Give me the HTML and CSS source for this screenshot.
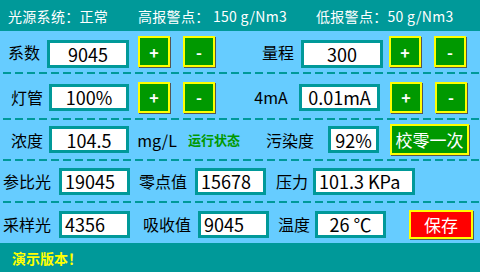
FILE: index.html
```html
<!DOCTYPE html>
<html lang="zh">
<head>
<meta charset="utf-8">
<title>光源系统</title>
<link rel="stylesheet" href="styles.css">
</head>
<body>
<div class="screen">
  <header class="topbar">
    <span class="t1">光源系统：正常</span>
    <span class="t2">高报警点： 150 g/Nm3</span>
    <span class="t3">低报警点：50 g/Nm3</span>
  </header>
  <main class="panel">
    <div class="row r1">
      <span class="lbl w32">系数</span>
      <span class="box b82 first g7a">9045</span>
      <span class="btn sq g1">+</span>
      <span class="btn sq g2">-</span>
      <span class="lbl w32 g3">量程</span>
      <span class="box b82 first g4">300</span>
      <span class="btn sq g5">+</span>
      <span class="btn sq g2">-</span>
    </div>
    <div class="dash"></div>
    <div class="row r2">
      <span class="lbl w32">灯管</span>
      <span class="box b80 g6">100%</span>
      <span class="btn sq g1">+</span>
      <span class="btn sq g2">-</span>
      <span class="lbl w36 g7">4mA</span>
      <span class="box b81 g8">0.01mA</span>
      <span class="btn sq g9">+</span>
      <span class="btn sq g2">-</span>
    </div>
    <div class="dash"></div>
    <div class="row r3">
      <span class="lbl w32">浓度</span>
      <span class="box b80 g6">104.5</span>
      <span class="lbl w40 g10">mg/L</span>
      <span class="status">运行状态</span>
      <span class="lbl w47 g11">污染度</span>
      <span class="box b51 g12">92%</span>
      <span class="btn wide g13">校零一次</span>
    </div>
    <div class="dash"></div>
    <div class="row r4">
      <span class="lbl w47">参比光</span>
      <span class="box b71 left g14">19045</span>
      <span class="lbl w48 g15">零点值</span>
      <span class="box b71 left g16">15678</span>
      <span class="lbl w32 g17">压力</span>
      <span class="box b102 left g18">101.3 KPa</span>
    </div>
    <div class="dash"></div>
    <div class="row r5">
      <span class="lbl w47">采样光</span>
      <span class="box b71 left g14">4356</span>
      <span class="lbl w48 g19">吸收值</span>
      <span class="box b71 left g20">9045</span>
      <span class="lbl w32 g21">温度</span>
      <span class="box b71 g22">26 ℃</span>
      <span class="btn save g23">保存</span>
    </div>
  </main>
  <footer class="bottombar">
    <span class="demo">演示版本！</span>
  </footer>
</div>
</body>
</html>
```

FILE: styles.css
```css
* { box-sizing: border-box; }
html, body { margin: 0; padding: 0; }
body {
  width: 480px;
  height: 272px;
  overflow: hidden;
  font-family: "Noto Sans CJK SC", "Noto Sans", sans-serif;
  color: #000;
}
.screen {
  width: 480px;
  height: 272px;
  display: flex;
  flex-direction: column;
  background: #66ccff;
}
.topbar {
  height: 31px;
  background: #009999;
  color: #fff;
  font-size: 14px;
  letter-spacing: 0.3px;
  display: flex;
  align-items: center;
  padding-left: 8px;
  white-space: pre;
}
.topbar .t1 { width: 130px; flex: none; }
.topbar .t2 { width: 178px; flex: none; }
.panel {
  flex: 1;
  display: flex;
  flex-direction: column;
}
.row {
  display: flex;
  align-items: center;
  font-size: 16px;
}
.r1 { height: 41px; padding-left: 8px; }
.r2 { height: 44px; padding-left: 11px; padding-top: 2px; }
.r3 { height: 39px; padding-left: 11px; }
.r4 { height: 40px; padding-left: 3px; }
.r5 { height: 40px; padding-left: 3px; padding-top: 2px; }
.dash {
  height: 2px;
  background: repeating-linear-gradient(to right, #009999 0 8px, transparent 8px 12px);
  background-position: 3px 0;
}
.lbl {
  white-space: nowrap;
  text-align: center;
  flex: none;
  line-height: 1;
}
.w32 { width: 32px; }
.w36 { width: 36px; }
.w40 { width: 40px; }
.w47 { width: 47px; }
.w48 { width: 48px; }
.box {
  flex: none;
  height: 27px;
  background: #fff;
  border: 3px solid #009999;
  display: flex;
  align-items: center;
  justify-content: center;
  font-size: 18px;
  line-height: 1;
  white-space: nowrap;
}
.box.first { height: 28px; margin-top: 5px; }
.box.left { justify-content: flex-start; padding-left: 3px; }
.b82 { width: 82px; }
.b80 { width: 80px; }
.b81 { width: 81px; }
.b51 { width: 51px; }
.b71 { width: 71px; }
.b102 { width: 102px; }
.btn {
  flex: none;
  display: flex;
  align-items: center;
  justify-content: center;
  color: #fff;
  background: #009900;
  border: 2px solid #ffff00;
  box-shadow: 1px 1px 0 #555;
  line-height: 1;
}
.sq { width: 32px; height: 31px; font-size: 16px; font-weight: bold; }
.wide { width: 79px; height: 31px; font-size: 17px; }
.save { width: 64px; height: 29px; background: #ff0000; font-size: 17px; }
.status {
  color: #009900;
  font-weight: bold;
  font-size: 13px;
  margin-left: 11px;
  white-space: nowrap;
  width: 55px;
  flex: none;
}
.g7a { margin-left: 7px; }
.g1 { margin-left: 9px; }
.g2 { margin-left: 13px; }
.g3 { margin-left: 47px; }
.g4 { margin-left: 7px; }
.g5 { margin-left: 6px; }
.g6 { margin-left: 6px; }
.g7 { margin-left: 38px; }
.g8 { margin-left: 10px; }
.g9 { margin-left: 10px; }
.g10 { margin-left: 8px; }
.g11 { margin-left: 23px; }
.g12 { margin-left: 15px; }
.g13 { margin-left: 11px; }
.g14 { margin-left: 9px; }
.g15 { margin-left: 9px; }
.g16 { margin-left: 8px; }
.g17 { margin-left: 10px; }
.g18 { margin-left: 5px; }
.g19 { margin-left: 13px; }
.g20 { margin-left: 7px; }
.g21 { margin-left: 9px; }
.g22 { margin-left: 5px; }
.g23 { margin-left: 23px; }
.bottombar {
  height: 29px;
  background: #009999;
  display: flex;
  align-items: center;
  padding-left: 12px;
}
.demo {
  color: #ffff00;
  font-weight: bold;
  font-size: 14px;
}
```
